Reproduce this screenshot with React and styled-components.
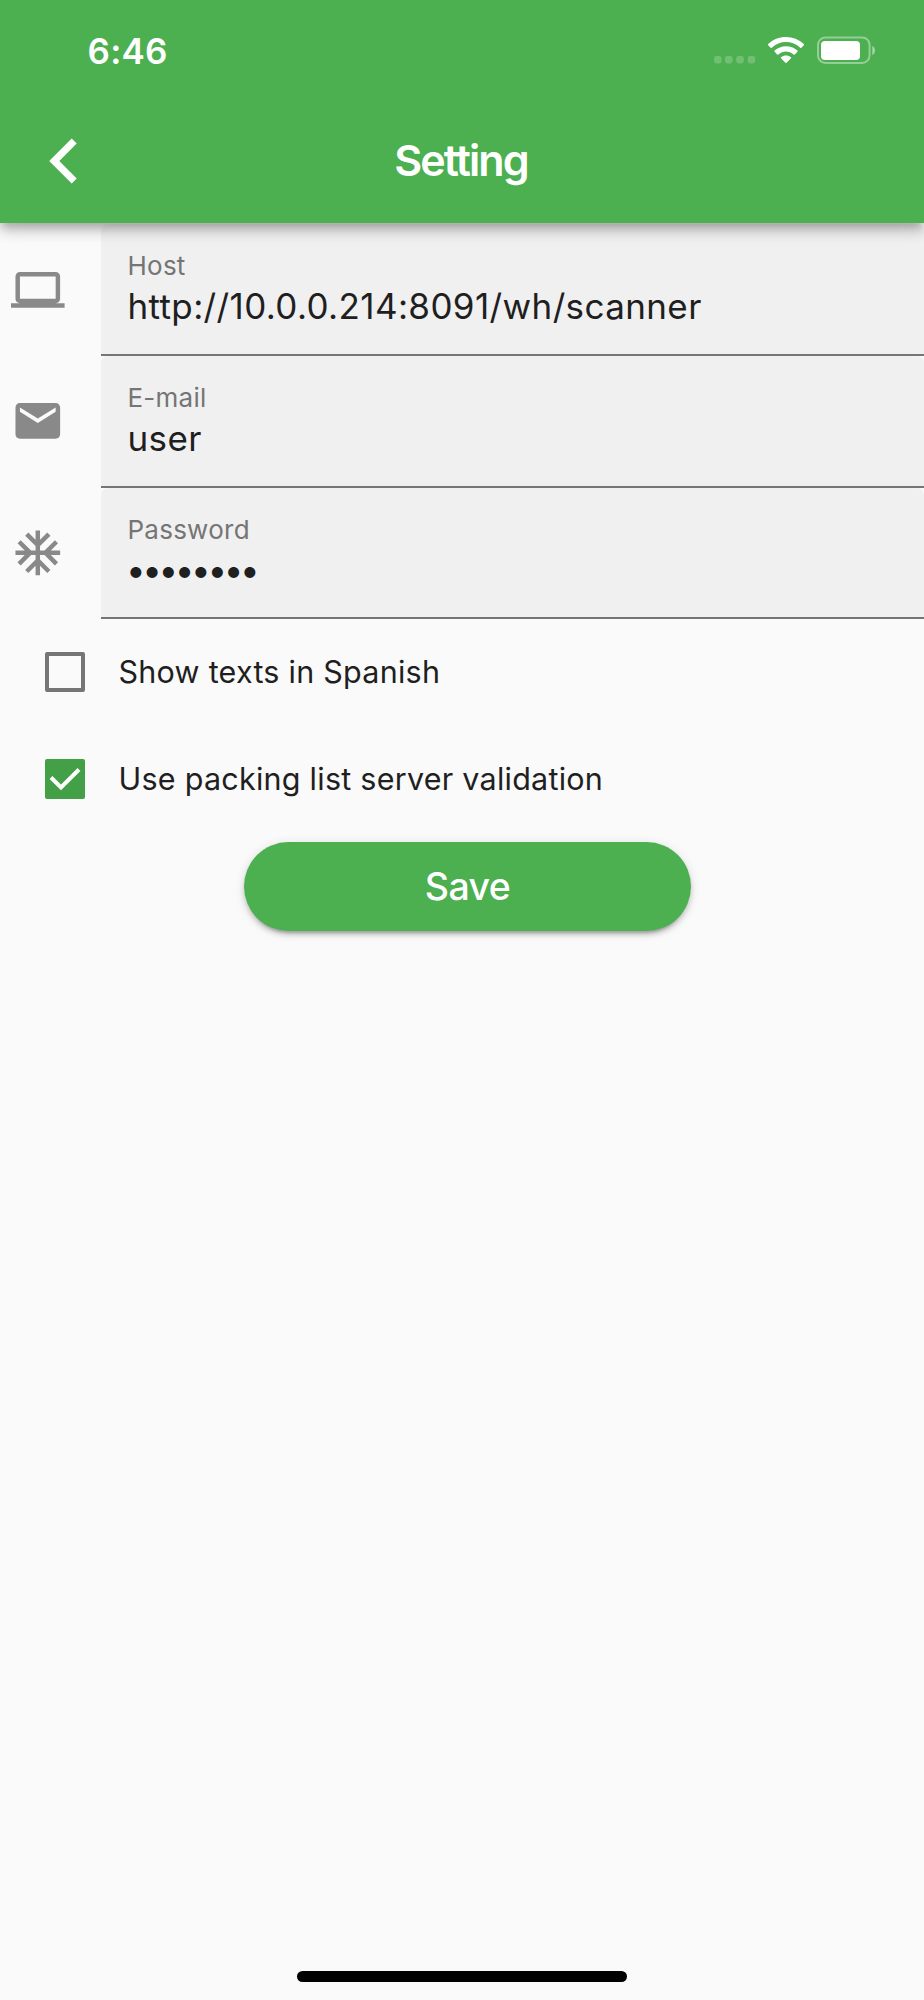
import React from "react";
import styled, { createGlobalStyle } from "styled-components";

const GlobalStyle = createGlobalStyle`
  * {
    box-sizing: border-box;
  }
  body {
    margin: 0;
    background-color: #fafafa;
    font-family: Inter, "Liberation Sans", sans-serif;
    font-weight: 400;
    color: #1f1f1f;
  }
`;

const Screen = styled.div`
  width: 924px;
  height: 2000px;
  display: flex;
  flex-direction: column;
  overflow: hidden;
  background-color: #fafafa;
`;

const Header = styled.header`
  height: 223px;
  flex: none;
  color: #fff;
  background-color: #4caf50;
  /* keeps the shadow above the first field */
  position: relative;
  z-index: 1;
  box-shadow: 0 4px 9px -2px rgba(0, 0, 0, 0.2), 0 9px 11px rgba(0, 0, 0, 0.14),
    0 2px 22px rgba(0, 0, 0, 0.12);
`;
const StatusBar = styled.div`
  height: 98px;
  padding: 2px 48px 0 87.6px;
  display: flex;
  align-items: center;
  justify-content: space-between;
`;
const Time = styled.span`
  padding-top: 2px;
  font-size: 35px;
  font-weight: 600;
  line-height: 42px;
  letter-spacing: 0.2px;
`;
const StatusIcons = styled.div`
  display: flex;
  align-items: center;
`;
const AppBar = styled.div`
  height: 125px;
  padding: 0 48px;
  display: grid;
  grid-template-columns: 48px 1fr 48px;
  align-items: center;
`;
const Back = styled.button`
  padding: 0;
  border: 0;
  background: none;
  color: inherit;
  display: flex;
  cursor: pointer;
`;
const Title = styled.h1`
  margin: 0 2px 1px 0;
  font-size: 43px;
  font-weight: 600;
  line-height: 52px;
  letter-spacing: -1.9px;
  text-align: center;
`;

const Form = styled.form`
  flex: 1;
  padding-top: 1.3px;
`;
const FieldRow = styled.label`
  height: 131.7px;
  padding-left: 11px;
  display: flex;
  align-items: center;
`;
const FieldIcon = styled.svg`
  width: 53.6px;
  height: 53.6px;
  margin: 0 36px 1.6px 0.2px;
  flex: none;
  fill: #898989;
`;
const Field = styled.div`
  flex: 1;
  height: 100%;
  padding: 25px 27px 0 26.7px;
  display: flex;
  flex-direction: column;
  background-color: #f0f0f0;
  border-bottom: 2px solid #757575;
  border-radius: 7px 7px 0 0;
`;
const Label = styled.span`
  font-size: 26px;
  line-height: 34px;
  letter-spacing: 0.25px;
  color: #757575;
`;
const Value = styled.span`
  padding-top: ${(props) => (props.$secret ? "1.5px" : "0.6px")};
  margin-left: ${(props) => (props.$secret ? "-1.5px" : "0")};
  font-size: 35px;
  line-height: 44px;
  letter-spacing: ${(props) => (props.$secret ? "-3.4px" : "0.38px")};
`;

const Options = styled.div`
  margin-top: -1px;
`;
const CheckRow = styled.label`
  height: 107px;
  padding-left: 45px;
  display: flex;
  align-items: center;
  gap: 33.5px;
`;
const OptionText = styled.span`
  font-size: 30.5px;
  line-height: 40px;
  letter-spacing: 0.25px;
`;
const Box = styled.span`
  width: 40px;
  height: 40px;
  flex: none;
  display: flex;
  border-radius: 2px;
  border: ${(props) => (props.$checked ? "0" : "4px solid #757575")};
  background-color: ${(props) => (props.$checked ? "#43a047" : "transparent")};
`;
const SaveButton = styled.button`
  display: block;
  width: 447px;
  height: 89px;
  margin: 9.6px 0 0 244px;
  padding: 0;
  border: 0;
  border-radius: 45px;
  color: #fff;
  background-color: #4caf50;
  font-family: inherit;
  font-size: 37.5px;
  font-weight: 500;
  letter-spacing: -0.6px;
  box-shadow: 0 6px 3px -4px rgba(0, 0, 0, 0.2), 0 4px 5px rgba(0, 0, 0, 0.14),
    0 2px 11px rgba(0, 0, 0, 0.12);
`;
const HomeIndicator = styled.div`
  width: 330px;
  height: 11px;
  margin: 0 auto 18px;
  flex: none;
  border-radius: 6px;
  background-color: #000;
`;

const fields = [
  {
    label: "Host",
    value: "http://10.0.0.214:8091/wh/scanner",
    icon: "M20 18c1.1 0 1.99-.9 1.99-2L22 6c0-1.1-.9-2-2-2H4c-1.1 0-2 .9-2 2v10c0 1.1.9 2 2 2H0v2h24v-2h-4zM4 6h16v10H4V6z",
  },
  {
    label: "E-mail",
    value: "user",
    icon: "M20 4H4c-1.1 0-1.99.9-1.99 2L2 18c0 1.1.9 2 2 2h16c1.1 0 2-.9 2-2V6c0-1.1-.9-2-2-2zm0 4l-8 5-8-5V6l8 5 8-5v2z",
  },
  {
    label: "Password",
    value: "••••••••",
    secret: true,
    icon: "M22 11h-4.17l3.24-3.24-1.41-1.42L15 11h-2V9l4.66-4.66-1.42-1.41L13 6.17V2h-2v4.17L7.76 2.93 6.34 4.34 11 9v2H9L4.34 6.34 2.93 7.76 6.17 11H2v2h4.17l-3.24 3.24 1.41 1.42L9 13h2v2l-4.66 4.66 1.42 1.41L11 17.83V22h2v-4.17l3.24 3.24 1.42-1.41L13 15v-2h2l4.66 4.66 1.41-1.42L17.83 13H22z",
  },
];

const options = [
  { text: "Show texts in Spanish", checked: false },
  { text: "Use packing list server validation", checked: true },
];

const Status = () => {
  return (
    <StatusIcons>
      <svg width="164" height="30" viewBox="712 35 164 30" fill="#fff">
        <g opacity="0.2">
          <rect x="714" y="56" width="7.6" height="7.4" rx="2.4" />
          <rect x="725" y="56" width="7.6" height="7.4" rx="2.4" />
          <rect x="736.2" y="56" width="7.6" height="7.4" rx="2.4" />
          <rect x="747.6" y="56" width="7.6" height="7.4" rx="2.4" />
        </g>
        <path d="M786 37c-6.800 0-13.100 2.600-17.800 7.100q-.6.600 0 1.200l2.400 2.500q.6.500 1.200 0a20.500 20.500 0 0 1 28.400 0q.6.500 1.200 0l2.400-2.500q.6-.6 0-1.200A25.800 25.800 0 0 0 786 37z" />
        <path d="M786 46.200c-4.300 0-8.300 1.600-11.400 4.400q-.6.600 0 1.200l2.600 2.600q.5.500 1.100 0a11.500 11.500 0 0 1 15.400 0q.6.500 1.100 0l2.600-2.600q.6-.6 0-1.200A17 17 0 0 0 786 46.200z" />
        <path d="M786 55.500c-1.900 0-3.600.6-5 1.700q-.6.500 0 1.100l4.400 4.500q.6.500 1.200 0l4.400-4.500q.6-.6 0-1.100c-1.400-1.100-3.100-1.700-5-1.700z" />
        <rect x="818" y="37.400" width="51.600" height="25.600" rx="7.500" fill="none" stroke="#fff" strokeOpacity="0.4" strokeWidth="2" />
        <rect x="821" y="41" width="39" height="19" rx="4" />
        <path d="M872.300 46v9c3.500-1.500 3.500-7.500 0-9z" opacity="0.5" />
      </svg>
    </StatusIcons>
  );
};

const App = () => {
  return (
    <>
      <GlobalStyle />
      <Screen>
        <Header>
          <StatusBar>
            <Time>6:46</Time>
            <Status />
          </StatusBar>
          <AppBar>
            <Back type="button" aria-label="Back">
              <svg width="30" height="46" viewBox="48 138 30 46" fill="#fff">
                <path d="M71.700 138.500l5 5L59.300 161l17.400 17.400-5 5L49.200 161z" />
              </svg>
            </Back>
            <Title>Setting</Title>
          </AppBar>
        </Header>
        <Form>
          {fields.map((field) => (
            <FieldRow key={field.label}>
              <FieldIcon viewBox="0 0 24 24">
                <path d={field.icon} />
              </FieldIcon>
              <Field>
                <Label>{field.label}</Label>
                <Value $secret={field.secret}>{field.value}</Value>
              </Field>
            </FieldRow>
          ))}
          <Options>
            {options.map((option) => (
              <CheckRow key={option.text}>
                <Box $checked={option.checked}>
                  {option.checked && (
                    <svg width="40" height="40" fill="none" stroke="#fff">
                      <path d="M6 18.500l10 10L34 10.500" strokeWidth="4" />
                    </svg>
                  )}
                </Box>
                <OptionText>{option.text}</OptionText>
              </CheckRow>
            ))}
          </Options>
          <SaveButton type="button">Save</SaveButton>
        </Form>
        <HomeIndicator />
      </Screen>
    </>
  );
};

export default App;
